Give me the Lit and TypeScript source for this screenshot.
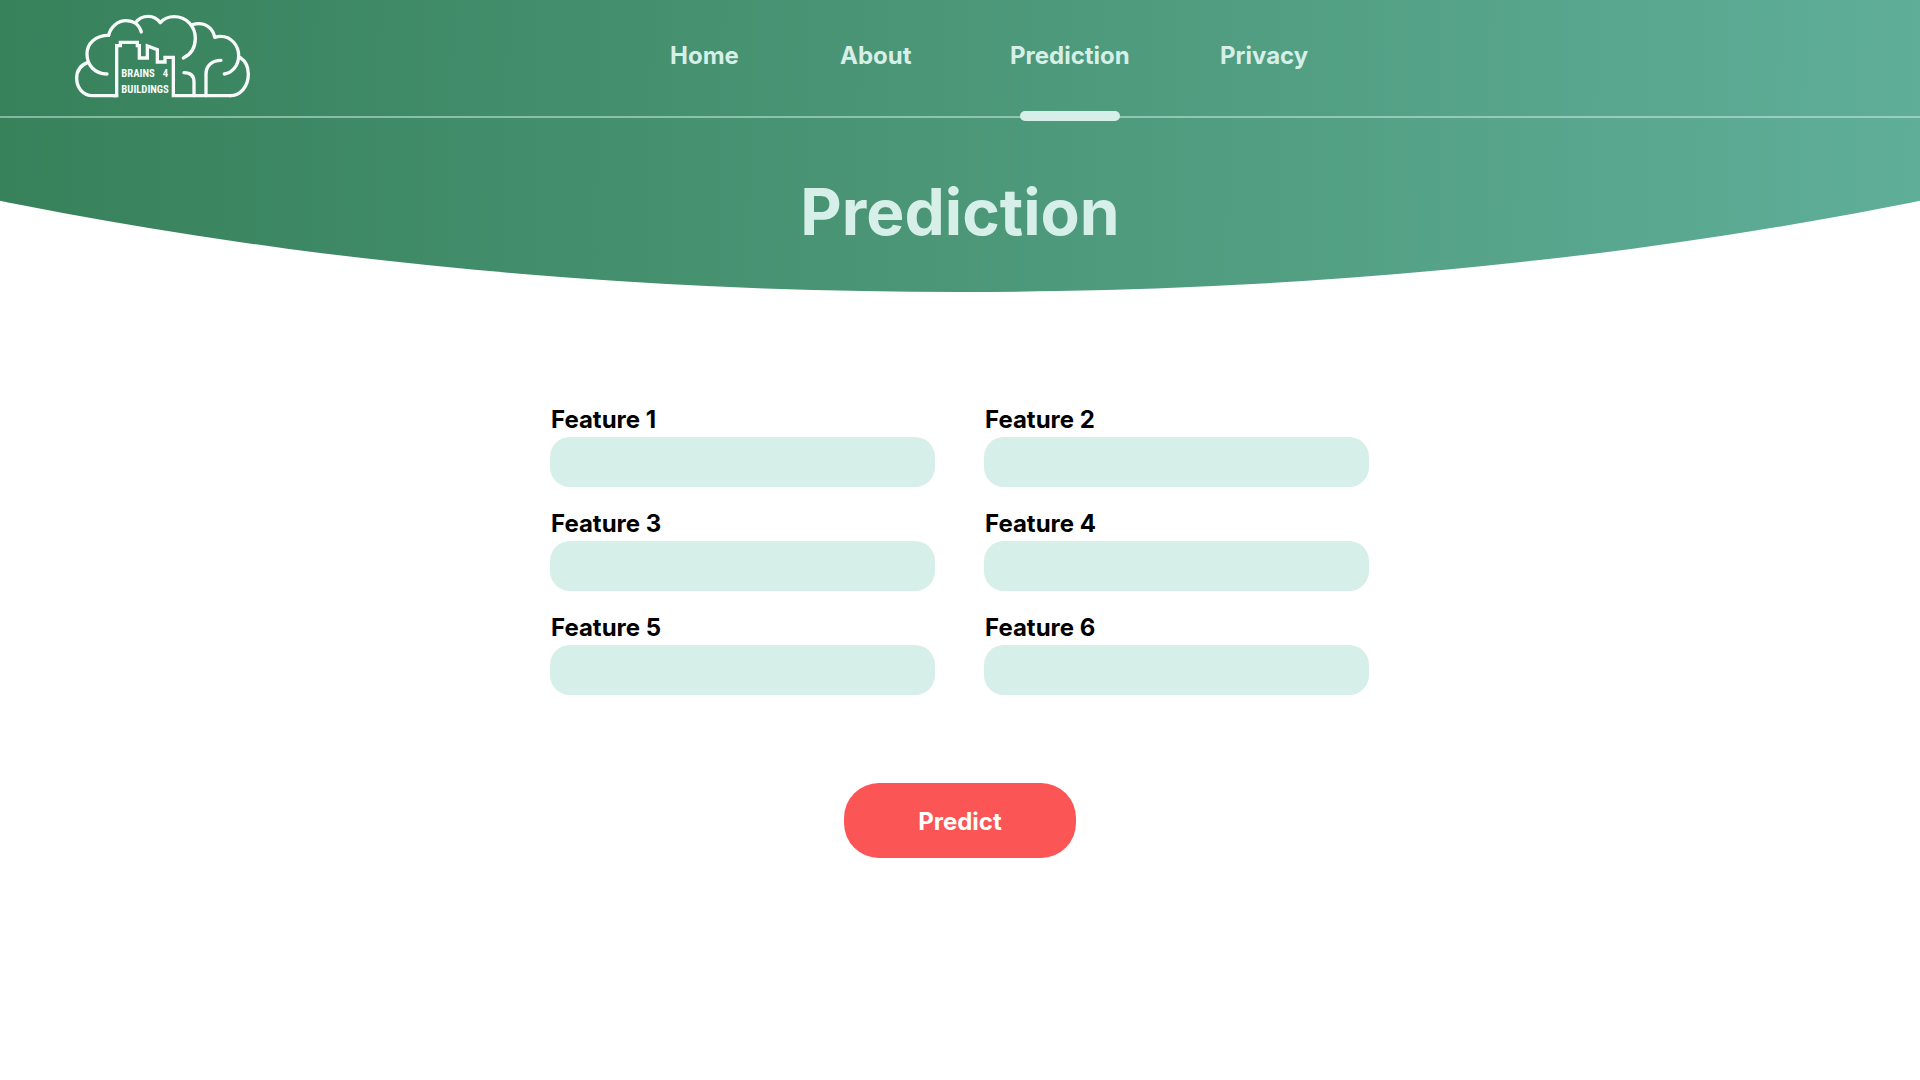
import { LitElement, html, css } from "lit";
import { customElement, state } from "lit/decorators.js";

@customElement("brand-logo")
export class BrandLogo extends LitElement {
  static styles = css`
    :host {
      display: block;
    }
    .logo {
      display: block;
      width: 180px;
      height: 88px;
    }
    .strokes {
      fill: none;
      stroke: #f6faf8;
      stroke-width: 10;
      stroke-linecap: round;
      stroke-linejoin: round;
    }
    .skyline {
      stroke-linejoin: miter;
    }
    .word {
      fill: #f6faf8;
      font-family: "Roboto Condensed", "Open Sans Condensed", "Liberation Sans Narrow", "Liberation Sans", sans-serif;
      font-size: 32px;
      font-weight: 700;
    }
  `;

  render() {
    return html`
      <svg class="logo" viewBox="39 36 540 264" role="img" aria-label="Brains 4 Buildings">
        <g class="strokes">
          <path d="M84 187C62 195 50 213 50 235C50 264 70 287 97 287H170" />
          <path class="skyline" d="M160 287H170V137H181V127H232V137H238V174H262V138L292 149V186H315V172H340V287H512" />
          <path d="M141 222C103 222 81 194 81 162C81 131 106 106 146 106" />
          <path d="M146 106C152 80 174 62 198 62C220 62 238 74 244 96" />
          <path d="M228 67C236 55 250 49 265 49C280 49 292 56 301 68C312 56 326 50 342 50C380 50 406 80 406 115C406 145 392 164 370 174" />
          <path d="M398 74C404 72 410 71 416 71C441 71 460 88 464 112C470 110 475 109 482 109C514 109 536 137 536 167C536 196 517 218 493 222" />
          <path d="M541 173C557 184 565 203 565 222C565 260 541 287 510 287" />
          <path d="M372 218C391 218 402 228 402 246V287" />
          <path d="M483 181C457 181 438 197 438 222V287" />
        </g>
        <text class="word" x="184" y="232">BRAINS</text>
        <text class="word" x="308" y="232">4</text>
        <text class="word" x="184" y="278">BUILDINGS</text>
      </svg>
    `;
  }
}

@customElement("app-root")
export class AppRoot extends LitElement {
  static styles = css`
    :host {
      display: block;
      min-height: 100vh;
      background: #ffffff;
      color: #000000;
      font-family: Inter, "Liberation Sans", sans-serif;
      font-size: 24px;
      line-height: 30px;
      font-weight: 700;
    }
    .hero {
      padding-bottom: 41px;
      background: linear-gradient(91deg, #37815b, #4b9778 50%, #5fae98);
      clip-path: ellipse(104% 254% at 50% -154%);
      color: #d6efe8;
    }
    .bar {
      display: grid;
      grid-template-columns: minmax(270px, 670fr) 1250fr;
      align-items: start;
      border-bottom: 2px solid rgba(214, 239, 232, 0.5);
    }
    .brand {
      justify-self: start;
      padding: 12px 0 0 73px;
    }
    .nav {
      display: grid;
      grid-template-columns: 170px 170px 210px auto;
      justify-content: start;
      justify-items: start;
    }
    .link {
      position: relative;
      padding: 41px 0 45px;
      color: inherit;
      text-decoration: none;
    }
    .link.active::after {
      content: "";
      position: absolute;
      left: calc(50% - 50px);
      bottom: -5px;
      width: 100px;
      height: 10px;
      border-radius: 5px;
      background: #d6efe8;
    }
    .title {
      margin: 55px 0 0;
      font-size: 64px;
      line-height: 78px;
      font-weight: 700;
      text-align: center;
    }
    .form {
      display: flex;
      flex-direction: column;
      gap: 88px;
      max-width: 820px;
      margin: 0 auto;
      padding: 113px 0 80px;
    }
    .fields {
      display: grid;
      grid-template-columns: repeat(2, minmax(0, 385px));
      gap: 22px 49px;
    }
    .field {
      display: flex;
      flex-direction: column;
      gap: 2px;
    }
    .label {
      padding-left: 1px;
    }
    .input {
      box-sizing: border-box;
      width: 100%;
      height: 50px;
      padding: 0 20px;
      border: 0;
      border-radius: 20px;
      background: #d6efe8;
      color: inherit;
      font: inherit;
    }
    .submit {
      align-self: center;
      width: 232px;
      height: 75px;
      padding: 2px 0 0;
      border: 0;
      border-radius: 35px;
      background: #fc5555;
      color: #ffffff;
      font: inherit;
      cursor: pointer;
    }
  `;

  @state() private active = "Prediction";

  private links = ["Home", "About", "Prediction", "Privacy"];
  private features = [1, 2, 3, 4, 5, 6];

  render() {
    return html`
      <header class="hero">
        <div class="bar">
          <a class="brand" href="#home"><brand-logo></brand-logo></a>
          <nav class="nav">
            ${this.links.map(
              (name) => html`<a
                class="link ${name === this.active ? "active" : ""}"
                href="#${name.toLowerCase()}"
                >${name}</a
              >`
            )}
          </nav>
        </div>
        <h1 class="title">${this.active}</h1>
      </header>
      <main>
        <form class="form" @submit=${(e: Event) => e.preventDefault()}>
          <div class="fields">
            ${this.features.map(
              (n) => html`<div class="field">
                <label class="label" for="feature-${n}">Feature ${n}</label>
                <input class="input" id="feature-${n}" name="feature-${n}" type="text" />
              </div>`
            )}
          </div>
          <button class="submit" type="submit">Predict</button>
        </form>
      </main>
    `;
  }
}
